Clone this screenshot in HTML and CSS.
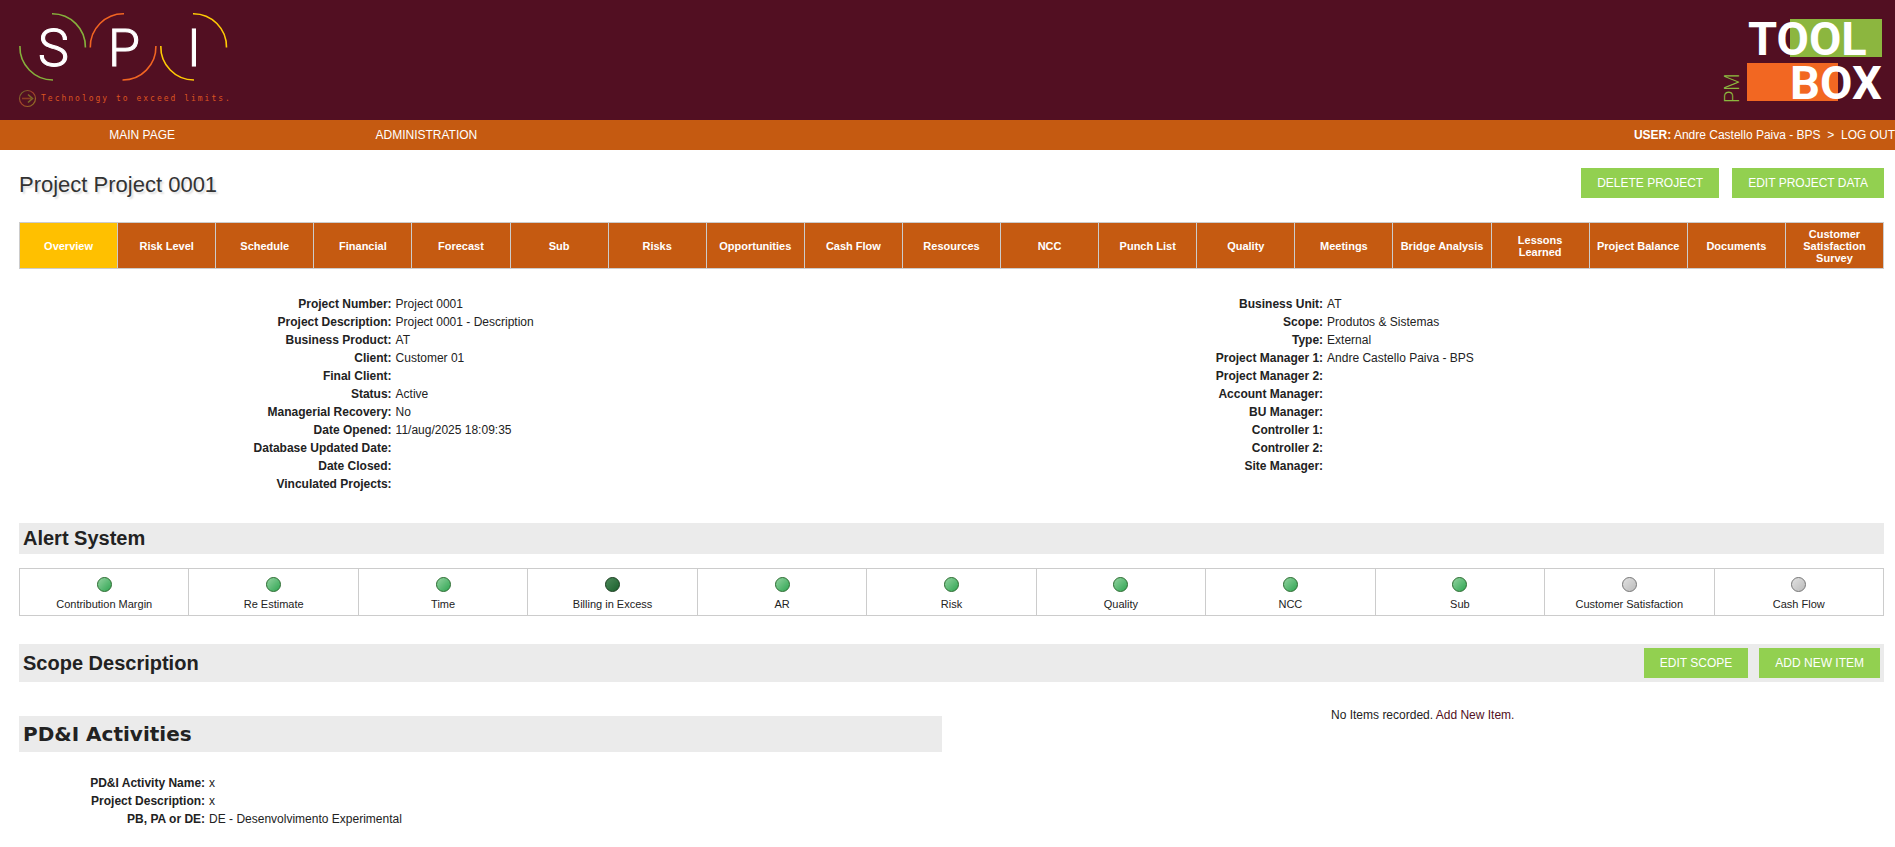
FILE: index.html
```html
<!DOCTYPE html>
<html lang="en">
<head>
<meta charset="utf-8">
<title>PM Toolbox - Project 0001</title>
<link rel="stylesheet" href="styles.css">
</head>
<body>
<header class="banner">
  <svg class="logo" width="240" height="120" viewBox="0 0 240 120" role="img" aria-label="SPI - Technology to exceed limits.">
    <defs>
      <linearGradient id="ring" x1="0" y1="0" x2="1" y2="1">
        <stop offset="0" stop-color="#5f7a2c"/><stop offset=".45" stop-color="#a8402a"/><stop offset="1" stop-color="#8a7a22"/>
      </linearGradient>
    </defs>
    <g fill="none" stroke-width="1.6">
      <path stroke="#86b03c" d="M52 13.7A33.2 33.2 0 0 1 85.4 47.5M19.9 46A33.2 33.2 0 0 0 53 80"/>
      <path stroke="#f26522" d="M90.3 47.5A33.2 33.2 0 0 1 124 13.7M155.9 46A33.2 33.2 0 0 1 122.5 80"/>
      <path stroke="#ffcb05" d="M193 13.7A33.2 33.2 0 0 1 226.5 47.5M160.8 46A33.2 33.2 0 0 0 194 80"/>
      <circle cx="27.5" cy="98.5" r="8" stroke="url(#ring)" stroke-width="1.2"/>
      <path stroke="#8a3d22" d="M22 98.5H31"/>
      <path stroke="#7d6a28" d="M28 94.5L32.500 98.500L28 102.500"/>
    </g>
    <g class="logo-letter"><text x="38" y="66">S</text><text x="108" y="66">P</text><text x="187" y="66">I</text></g>
    <text class="tagline" x="41" y="101">Technology to exceed limits.</text>
  </svg>
  <svg class="logo" width="175" height="120" viewBox="0 0 175 120" role="img" aria-label="PM Toolbox">
    <path fill="#8cb63f" d="M70 19h92v38H70z"/>
    <path fill="#f26722" d="M27 63h91v38H27z"/>
    <g class="box-letter"><text x="28" y="55">TOOL</text><text x="70" y="99">BOX</text></g>
    <text class="pm" transform="translate(19 103) rotate(-90)">PM</text>
  </svg>
</header>
<nav class="menu">
  <a href="#main">MAIN PAGE</a>
  <a href="#admin">ADMINISTRATION</a>
  <div class="user"><b>USER:</b> Andre Castello Paiva - BPS &nbsp;&gt;&nbsp; <a href="#logout">LOG OUT</a></div>
</nav>
<main class="page">
  <div class="title-row">
    <h1>Project Project 0001</h1>
    <div class="actions"><button type="button">DELETE PROJECT</button><button type="button">EDIT PROJECT DATA</button></div>
  </div>
  <nav class="tabs">
    <a class="active" href="#t1">Overview</a><a href="#t2">Risk Level</a><a href="#t3">Schedule</a><a href="#t4">Financial</a><a href="#t5">Forecast</a><a href="#t6">Sub</a><a href="#t7">Risks</a><a href="#t8">Opportunities</a><a href="#t9">Cash Flow</a><a href="#t10">Resources</a><a href="#t11">NCC</a><a href="#t12">Punch List</a><a href="#t13">Quality</a><a href="#t14">Meetings</a><a href="#t15">Bridge Analysis</a><a href="#t16">Lessons Learned</a><a href="#t17">Project Balance</a><a href="#t18">Documents</a><a href="#t19">Customer Satisfaction Survey</a>
  </nav>
  <section class="details">
    <dl class="fields">
      <dt>Project Number:</dt><dd>Project 0001</dd>
      <dt>Project Description:</dt><dd>Project 0001 - Description</dd>
      <dt>Business Product:</dt><dd>AT</dd>
      <dt>Client:</dt><dd>Customer 01</dd>
      <dt>Final Client:</dt><dd></dd>
      <dt>Status:</dt><dd>Active</dd>
      <dt>Managerial Recovery:</dt><dd>No</dd>
      <dt>Date Opened:</dt><dd>11/aug/2025 18:09:35</dd>
      <dt>Database Updated Date:</dt><dd></dd>
      <dt>Date Closed:</dt><dd></dd>
      <dt>Vinculated Projects:</dt><dd></dd>
    </dl>
    <dl class="fields">
      <dt>Business Unit:</dt><dd>AT</dd>
      <dt>Scope:</dt><dd>Produtos &amp; Sistemas</dd>
      <dt>Type:</dt><dd>External</dd>
      <dt>Project Manager 1:</dt><dd>Andre Castello Paiva - BPS</dd>
      <dt>Project Manager 2:</dt><dd></dd>
      <dt>Account Manager:</dt><dd></dd>
      <dt>BU Manager:</dt><dd></dd>
      <dt>Controller 1:</dt><dd></dd>
      <dt>Controller 2:</dt><dd></dd>
      <dt>Site Manager:</dt><dd></dd>
    </dl>
  </section>
  <h2 class="bar">Alert System</h2>
  <table class="alerts">
    <tr>
      <td><i class="dot"></i>Contribution Margin</td>
      <td><i class="dot"></i>Re Estimate</td>
      <td><i class="dot"></i>Time</td>
      <td><i class="dot dark"></i>Billing in Excess</td>
      <td><i class="dot"></i>AR</td>
      <td><i class="dot"></i>Risk</td>
      <td><i class="dot"></i>Quality</td>
      <td><i class="dot"></i>NCC</td>
      <td><i class="dot"></i>Sub</td>
      <td><i class="dot gray"></i>Customer Satisfaction</td>
      <td><i class="dot gray"></i>Cash Flow</td>
    </tr>
  </table>
  <div class="bar scope-bar">
    <h2>Scope Description</h2>
    <div class="actions"><button type="button">EDIT SCOPE</button><button type="button">ADD NEW ITEM</button></div>
  </div>
  <section class="scope">
    <div class="activities">
      <h2 class="bar heavy">PD&amp;I Activities</h2>
      <dl class="fields narrow">
        <dt>PD&amp;I Activity Name:</dt><dd>x</dd>
        <dt>Project Description:</dt><dd>x</dd>
        <dt>PB, PA or DE:</dt><dd>DE - Desenvolvimento Experimental</dd>
      </dl>
    </div>
    <p class="empty">No Items recorded. <a href="#add">Add New Item.</a></p>
  </section>
</main>
</body>
</html>
```
FILE: styles.css
```css
* { box-sizing: border-box; }
body {
  margin: 0;
  background: #fff;
  color: #222;
  font: 12px/18px "Liberation Sans", Arial, sans-serif;
}
h1, h2, dl, dd, p { margin: 0; }
a { color: inherit; text-decoration: none; }

.banner {
  display: flex;
  justify-content: space-between;
  background: #520f22;
}
.logo { display: block; }
.logo-letter { font: 300 52px Roboto, sans-serif; fill: #fff; stroke: #fff; stroke-width: 1; }
.tagline { font: 8px "DejaVu Sans Mono", monospace; letter-spacing: 2px; fill: #dc5421; }
.box-letter { font: bold 47px Roboto, sans-serif; fill: #fff; }
.pm { font: 300 20px Roboto, sans-serif; fill: #8cb63f; }

.menu {
  display: flex;
  align-items: center;
  height: 30px;
  background: #c55a11;
  color: #fff;
}
.menu > a { width: 15%; text-align: center; }
.user { margin-left: auto; white-space: nowrap; }

.page { padding: 18px 11px 0 19px; }
.title-row { display: flex; justify-content: space-between; height: 54px; }
h1 {
  padding-top: 4px;
  color: #333;
  font-size: 22px;
  line-height: 26px;
  font-weight: normal;
  text-shadow: 2px 2px 2px #ddd;
}
.actions { display: flex; gap: 13px; }
button {
  height: 30px;
  padding: 0 16px;
  border: 0;
  background: #92d050;
  color: #fff;
  font: 12px "Liberation Sans", Arial, sans-serif;
}

.tabs {
  display: grid;
  grid-template-columns: repeat(19, 1fr);
  gap: 1px;
  padding: 1px;
  background: #ccc;
}
.tabs a {
  display: flex;
  align-items: center;
  justify-content: center;
  min-height: 45px;
  padding: 0 4px;
  background: #c55a11;
  color: #fff;
  font-size: 11px;
  line-height: 12px;
  font-weight: bold;
  text-align: center;
}
.tabs .active { background: #ffc000; }

.details {
  display: grid;
  grid-template-columns: 1fr 1fr;
  align-items: start;
  padding: 26px 2px 30px 0;
}
.fields {
  display: grid;
  grid-template-columns: 40% 1fr;
  column-gap: 4px;
  grid-auto-rows: 18px;
}
.fields dt { font-weight: bold; text-align: right; }
.fields.narrow { grid-template-columns: 20% 1fr; padding: 22px 0 0 2px; }

h2 { font-size: 20px; line-height: 30px; }
.bar { padding: 0 4px 1px; background: #ebebeb; }

.alerts {
  width: 100%;
  margin: 14px 0 28px;
  border-collapse: collapse;
  table-layout: fixed;
}
.alerts td {
  height: 47px;
  padding: 8px 0 1px;
  border: 1px solid #ccc;
  font-size: 11px;
  line-height: 20px;
  text-align: center;
}
.dot {
  display: block;
  width: 15px;
  height: 15px;
  margin: 0 auto 2px;
  border: 1px solid #2f6d33;
  border-radius: 50%;
  background: linear-gradient(135deg, #93d3a0, #2fa552);
}
.dot.dark { border-color: #1d3f22; background: linear-gradient(135deg, #4d8a5b, #1a602c); }
.dot.gray { border-color: #777; background: linear-gradient(135deg, #e2e2e2, #bbb); }

.scope-bar { display: flex; justify-content: space-between; padding: 4px; }
.scope-bar .actions { gap: 11px; }
.scope { display: grid; grid-template-columns: 1fr 1fr; gap: 20px; }
.activities { padding-top: 34px; }
.heavy { padding: 3px 4px; font-family: "DejaVu Sans", sans-serif; }
.empty { padding-top: 24px; text-align: center; }
.empty a { color: #520f22; }
```
